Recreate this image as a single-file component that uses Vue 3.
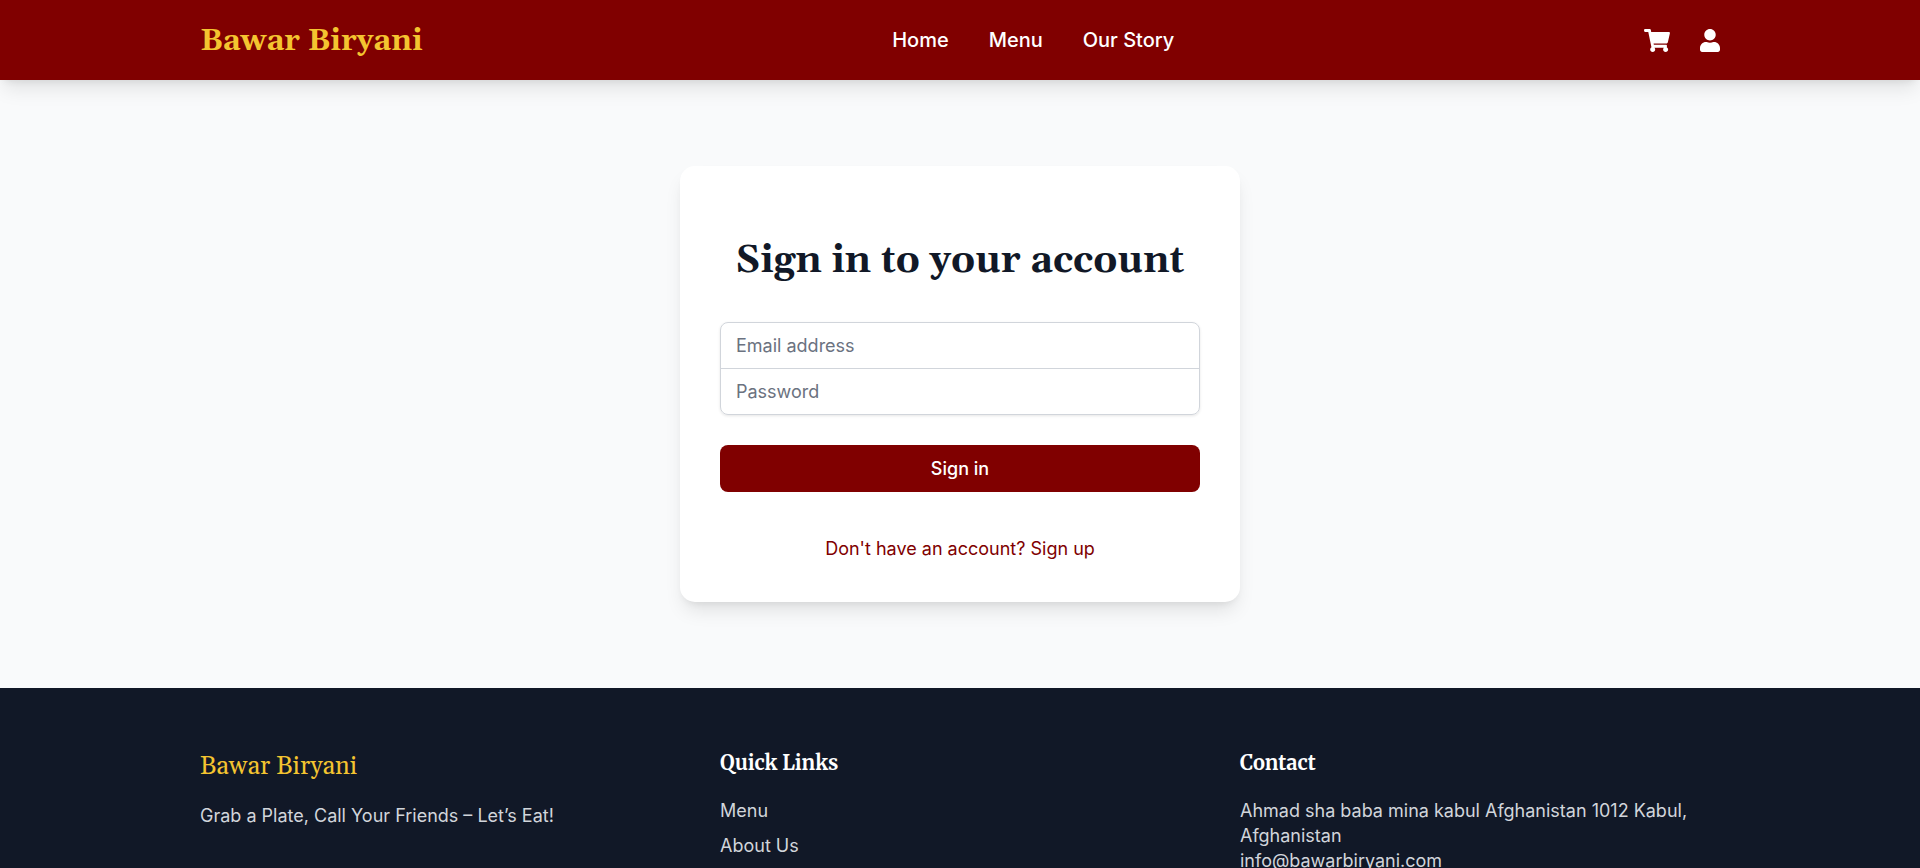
<script setup>
import { ref } from 'vue'

const email = ref('')
const password = ref('')
const navLinks = ['Home', 'Menu', 'Our Story']
const quickLinks = ['Menu', 'About Us']
</script>

<template>
  <div class="page">
    <header class="header">
      <div class="container bar">
        <a class="brand" href="#">Bawar Biryani</a>
        <nav class="nav">
          <a v-for="link in navLinks" :key="link" href="#">{{ link }}</a>
        </nav>
        <div class="actions">
          <a class="action" href="#" aria-label="Cart">
            <svg class="cart" viewBox="0 0 576 512" fill="currentColor" aria-hidden="true">
              <path d="M528.12 301.319l47.273-208C578.806 78.301 567.391 64 551.99 64H159.208l-9.166-44.81C147.758 8.021 137.93 0 126.529 0H24C10.745 0 0 10.745 0 24v16c0 13.255 10.745 24 24 24h69.883l70.248 343.435C147.325 417.1 136 435.222 136 456c0 30.928 25.072 56 56 56s56-25.072 56-56c0-15.674-6.447-29.835-16.824-40h209.647C430.447 426.165 424 440.326 424 456c0 30.928 25.072 56 56 56s56-25.072 56-56c0-22.172-12.888-41.332-31.579-50.405l5.517-24.276c3.413-15.018-8.002-29.319-23.403-29.319H218.117l-6.545-32h293.145c11.206 0 20.92-7.754 23.403-18.681z" />
            </svg>
          </a>
          <a class="action" href="#" aria-label="Account">
            <svg class="user" viewBox="0 0 448 512" fill="currentColor" aria-hidden="true">
              <path d="M224 256c70.700 0 128-57.300 128-128S294.700 0 224 0 96 57.300 96 128s57.300 128 128 128zm89.600 32h-16.700c-22.200 10.200-46.900 16-72.900 16s-50.600-5.800-72.900-16h-16.700C60.200 288 0 348.200 0 422.400V464c0 26.500 21.500 48 48 48h352c26.500 0 48-21.500 48-48v-41.600c0-74.200-60.200-134.400-134.400-134.400z" />
            </svg>
          </a>
        </div>
      </div>
    </header>

    <main class="main">
      <section class="card">
        <h1 class="title">Sign in to your account</h1>
        <form class="form" @submit.prevent>
          <div class="fields">
            <input id="email" v-model="email" type="email" placeholder="Email address" aria-label="Email address" />
            <input id="password" v-model="password" type="password" placeholder="Password" aria-label="Password" />
          </div>
          <button class="submit" type="submit">Sign in</button>
        </form>
        <a class="signup" href="#">Don't have an account? Sign up</a>
      </section>
    </main>

    <footer class="footer">
      <div class="container columns">
        <div>
          <p class="footer-brand">Bawar Biryani</p>
          <p>Grab a Plate, Call Your Friends – Let’s Eat!</p>
        </div>
        <div>
          <h2 class="footer-title">Quick Links</h2>
          <ul class="links">
            <li v-for="link in quickLinks" :key="link"><a href="#">{{ link }}</a></li>
          </ul>
        </div>
        <div>
          <h2 class="footer-title">Contact</h2>
          <address>
            <p>Ahmad sha baba mina kabul Afghanistan 1012 Kabul, Afghanistan</p>
            <p><a href="#">info@bawarbiryani.com</a></p>
          </address>
        </div>
      </div>
    </footer>
  </div>
</template>

<style>
body {
  margin: 0;
  background: #f9fafb;
}
html {
  scrollbar-width: none;
}
</style>

<style scoped>
.page {
  min-height: 100vh;
  font-family: Inter, "Liberation Sans", sans-serif;
  font-size: 18px;
  line-height: 25px;
}
.page * {
  box-sizing: border-box;
}
a {
  color: inherit;
  text-decoration: none;
}
p, h1, h2, ul {
  margin: 0;
  padding: 0;
}
.container {
  max-width: 1600px;
  margin: 0 auto;
  padding: 0 40px;
}
.header {
  position: relative;
  background: #800000;
  color: #fff;
  box-shadow: 0 12px 19px -4px rgb(0 0 0 / 0.1), 0 5px 8px -5px rgb(0 0 0 / 0.1);
}
.bar {
  display: flex;
  align-items: center;
  justify-content: space-between;
  height: 80px;
}
.brand {
  padding-top: 2px;
  font-family: Georgia, Gelasio, "Liberation Serif", serif;
  font-size: 30px;
  line-height: 40px;
  font-weight: 700;
  color: #f4c430;
}
.nav {
  display: flex;
  gap: 40px;
  font-size: 20px;
  line-height: 30px;
  font-weight: 500;
}
.actions {
  display: flex;
  align-items: center;
  gap: 30px;
}
.action {
  display: flex;
}
.cart {
  width: 26px;
  height: 23px;
}
.user {
  width: 20px;
  height: 23px;
}
.main {
  display: flex;
  justify-content: center;
  padding: 86px 20px;
}
.card {
  width: 100%;
  max-width: 560px;
  padding: 73px 40px 41px;
  border-radius: 15px;
  background: #fff;
  box-shadow: 0 12px 19px -4px rgb(0 0 0 / 0.1), 0 5px 8px -5px rgb(0 0 0 / 0.1);
  text-align: center;
}
.title {
  font-family: Georgia, Gelasio, "Liberation Serif", serif;
  font-size: 38px;
  line-height: 45px;
  font-weight: 700;
  color: #111827;
}
.form {
  display: grid;
  gap: 30px;
  margin: 38px 0 44px;
}
.fields {
  border: 1px solid #d1d5db;
  border-radius: 8px;
  box-shadow: 0 1px 3px rgb(0 0 0 / 0.1);
}
.fields input {
  display: block;
  width: 100%;
  height: 45px;
  padding: 0 15px;
  border: 0;
  border-radius: 8px;
  background: transparent;
  font: inherit;
  color: #111827;
}
.fields input::placeholder {
  color: #6b7280;
  opacity: 1;
}
#email {
  height: 46px;
  border-bottom: 1px solid #d1d5db;
  border-radius: 8px 8px 0 0;
}
.submit {
  height: 47px;
  border: 0;
  border-radius: 8px;
  background: #800000;
  color: #fff;
  font: inherit;
  font-weight: 500;
}
.signup {
  display: block;
  color: #800000;
}
.footer {
  padding: 60px 0;
  background: #111827;
  color: #d1d5db;
}
.columns {
  display: grid;
  grid-template-columns: repeat(3, 1fr);
  gap: 40px;
}
.footer-brand {
  padding-top: 2px;
  margin-bottom: 18px;
  font-family: Georgia, Gelasio, "Liberation Serif", serif;
  font-size: 25px;
  line-height: 35px;
  color: #f4c430;
}
.footer-title {
  margin-bottom: 20px;
  font-family: Merriweather, Georgia, Gelasio, "Liberation Serif", serif;
  font-size: 20px;
  line-height: 30px;
  font-weight: 700;
  color: #fff;
}
.links {
  display: grid;
  gap: 10px;
  list-style: none;
}
address {
  font-style: normal;
}
</style>
